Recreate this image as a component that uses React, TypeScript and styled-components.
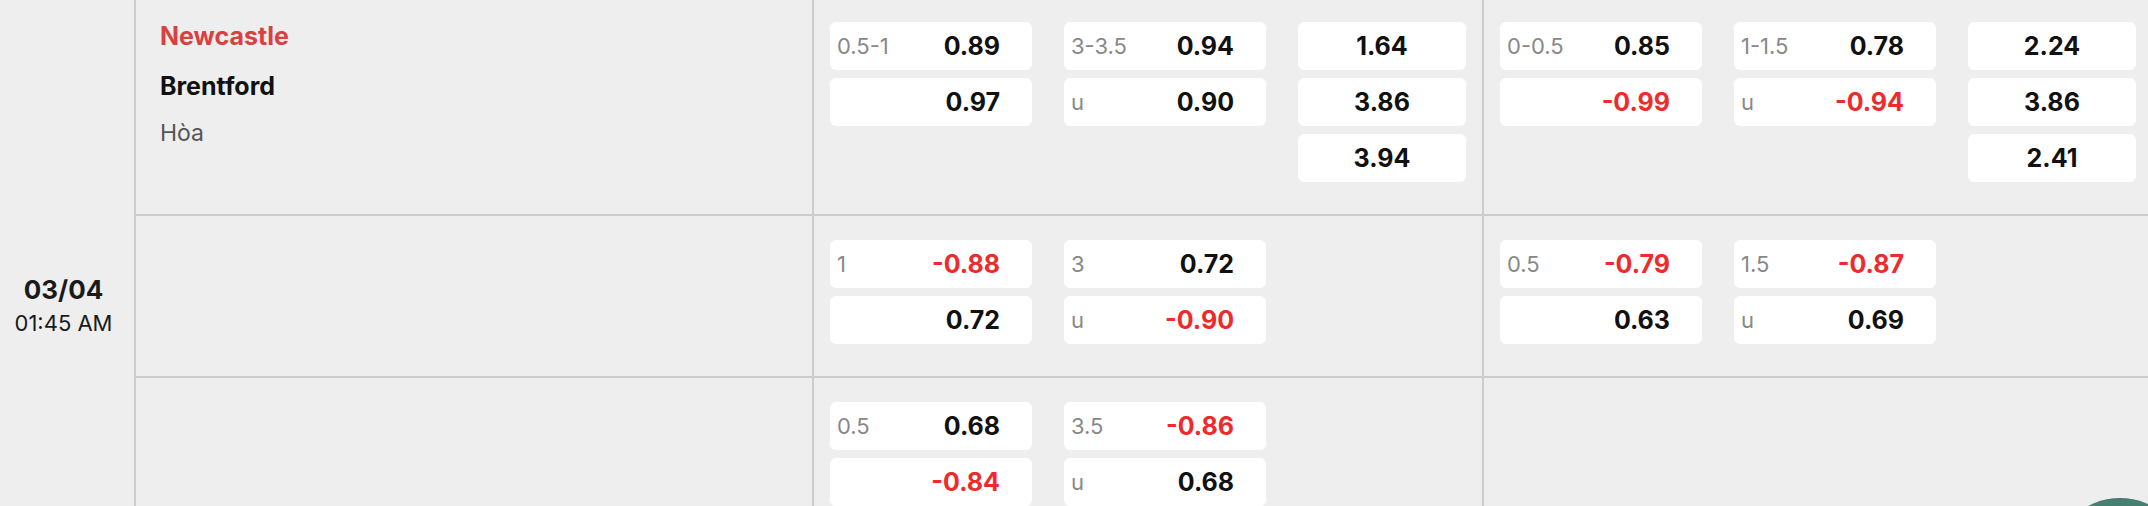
import React from 'react';
import styled, { createGlobalStyle } from 'styled-components';

const Global = createGlobalStyle`
  html, body { margin: 0; padding: 0; background: #eeeeee; overflow: hidden; }
  body { font-family: Inter, "Noto Sans", sans-serif; color: #111; }
`;

const Board = styled.div`
  display: grid;
  grid-template-columns: 136px 678px 670px 670px;
  grid-template-rows: auto auto minmax(236px, auto);
  width: 2154px;
  margin-top: -2px;
  background: #eeeeee;
`;

const DateCell = styled.div`
  grid-column: 1;
  grid-row: 1 / span 3;
  border-right: 2px solid #cdcdcd;
  display: flex;
  flex-direction: column;
  align-items: center;
  justify-content: center;
  padding-right: 7px;
`;

const DateText = styled.div`
  font-size: 26px;
  font-weight: 700;
  line-height: 31px;
  color: #1a1a1a;
`;

const TimeText = styled.div`
  font-size: 22px;
  line-height: 30px;
  margin-top: 3px;
  color: #1a1a1a;
`;

const TeamCell = styled.div`
  border-right: 2px solid #cdcdcd;
  border-bottom: 2px solid #cdcdcd;
  padding: 23px 24px;
  display: flex;
  flex-direction: column;
`;

const TeamName = styled.div<{ $home?: boolean }>`
  font-size: 25px;
  font-weight: 700;
  line-height: 30px;
  color: ${p => (p.$home ? '#d94141' : '#111')};
  & + & { margin-top: 20px; }
`;

const DrawText = styled.div`
  font-size: 23px;
  line-height: 30px;
  margin-top: 17px;
  color: #555;
`;

const MarketCell = styled.div<{ $last?: boolean }>`
  border-right: ${p => (p.$last ? 'none' : '2px solid #cdcdcd')};
  border-bottom: 2px solid #cdcdcd;
  padding: 24px 16px 32px;
  display: flex;
  align-items: flex-start;
  gap: 32px;
`;

const OddsStack = styled.div`
  display: flex;
  flex-direction: column;
  gap: 8px;
`;

const OddsBox = styled.div<{ $center?: boolean }>`
  width: ${p => (p.$center ? 168 : 202)}px;
  height: 48px;
  box-sizing: border-box;
  background: #ffffff;
  border-radius: 6px;
  display: flex;
  align-items: center;
  justify-content: ${p => (p.$center ? 'center' : 'flex-start')};
  padding: ${p => (p.$center ? '0' : '0 32px 0 7px')};
`;

const Label = styled.span`
  font-size: 22px;
  line-height: 30px;
  color: #888888;
`;

const Value = styled.span<{ $neg?: boolean; $center?: boolean }>`
  font-size: 25px;
  font-weight: 700;
  line-height: 30px;
  color: ${p => (p.$neg ? '#ee2b2b' : '#111')};
  margin-left: ${p => (p.$center ? '0' : 'auto')};
`;

const FloatButton = styled.div`
  position: fixed;
  left: 2052px;
  top: 498px;
  width: 136px;
  height: 136px;
  border-radius: 50%;
  background: #477e72;
`;

type Line = { label: string; value: string };
type Market = { hdp?: Line[]; ou?: Line[]; x12?: string[] };

const rows: { m1: Market; m2: Market }[] = [
  {
    m1: {
      hdp: [{ label: '0.5-1', value: '0.89' }, { label: '', value: '0.97' }],
      ou: [{ label: '3-3.5', value: '0.94' }, { label: 'u', value: '0.90' }],
      x12: ['1.64', '3.86', '3.94'],
    },
    m2: {
      hdp: [{ label: '0-0.5', value: '0.85' }, { label: '', value: '-0.99' }],
      ou: [{ label: '1-1.5', value: '0.78' }, { label: 'u', value: '-0.94' }],
      x12: ['2.24', '3.86', '2.41'],
    },
  },
  {
    m1: {
      hdp: [{ label: '1', value: '-0.88' }, { label: '', value: '0.72' }],
      ou: [{ label: '3', value: '0.72' }, { label: 'u', value: '-0.90' }],
    },
    m2: {
      hdp: [{ label: '0.5', value: '-0.79' }, { label: '', value: '0.63' }],
      ou: [{ label: '1.5', value: '-0.87' }, { label: 'u', value: '0.69' }],
    },
  },
  {
    m1: {
      hdp: [{ label: '0.5', value: '0.68' }, { label: '', value: '-0.84' }],
      ou: [{ label: '3.5', value: '-0.86' }, { label: 'u', value: '0.68' }],
    },
    m2: {},
  },
];

const LineStack: React.FC<{ lines: Line[] }> = ({ lines }) => (
  <OddsStack>
    {lines.map((l, i) => (
      <OddsBox key={i}>
        <Label>{l.label}</Label>
        <Value $neg={l.value.startsWith('-')}>{l.value}</Value>
      </OddsBox>
    ))}
  </OddsStack>
);

const MarketView: React.FC<{ m: Market; last?: boolean }> = ({ m, last }) => (
  <MarketCell $last={last}>
    {m.hdp && <LineStack lines={m.hdp} />}
    {m.ou && <LineStack lines={m.ou} />}
    {m.x12 && (
      <OddsStack>
        {m.x12.map((v, i) => (
          <OddsBox key={i} $center>
            <Value $center $neg={v.startsWith('-')}>{v}</Value>
          </OddsBox>
        ))}
      </OddsStack>
    )}
  </MarketCell>
);

export default function App() {
  return (
    <>
      <Global />
      <Board>
        <DateCell>
          <DateText>03/04</DateText>
          <TimeText>01:45 AM</TimeText>
        </DateCell>
        {rows.map((r, i) => (
          <React.Fragment key={i}>
            <TeamCell>
              {i === 0 && (
                <>
                  <TeamName $home>Newcastle</TeamName>
                  <TeamName>Brentford</TeamName>
                  <DrawText>Hòa</DrawText>
                </>
              )}
            </TeamCell>
            <MarketView m={r.m1} />
            <MarketView m={r.m2} last />
          </React.Fragment>
        ))}
      </Board>
      <FloatButton />
    </>
  );
}
